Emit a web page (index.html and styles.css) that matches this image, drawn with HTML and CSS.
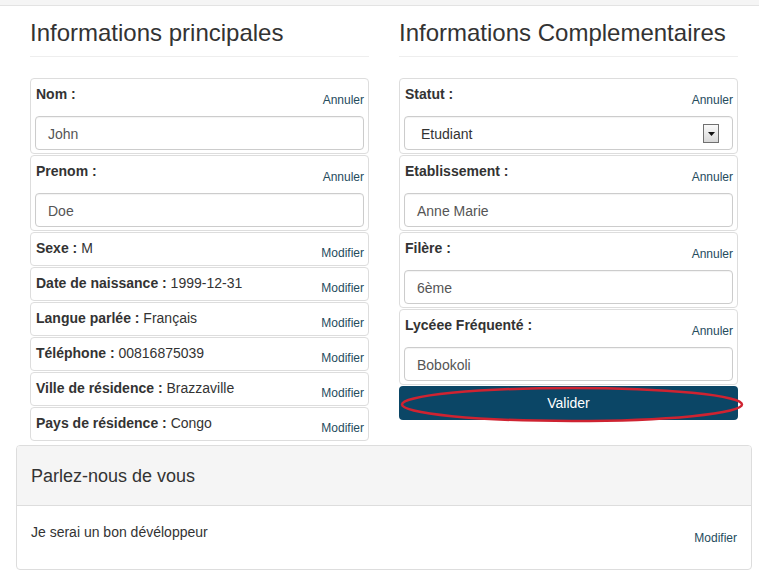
FILE: index.html
```html
<!DOCTYPE html>
<html lang="fr">
<head>
<meta charset="utf-8">
<title>Profil</title>
<link rel="stylesheet" href="styles.css">
</head>
<body>
<div class="topbar"></div>
<div class="page">
  <div class="cols">
    <div class="col">
      <h3 class="title">Informations principales</h3>
      <div class="field">
        <div class="row"><span class="lbl"><b>Nom :</b></span><a class="act">Annuler</a></div>
        <div class="input">John</div>
      </div>
      <div class="field">
        <div class="row"><span class="lbl"><b>Prenom :</b></span><a class="act">Annuler</a></div>
        <div class="input">Doe</div>
      </div>
      <div class="field simple">
        <div class="row"><span class="lbl"><b>Sexe :</b> M</span><a class="act">Modifier</a></div>
      </div>
      <div class="field simple">
        <div class="row"><span class="lbl"><b>Date de naissance :</b> 1999-12-31</span><a class="act">Modifier</a></div>
      </div>
      <div class="field simple">
        <div class="row"><span class="lbl"><b>Langue parlée :</b> Français</span><a class="act">Modifier</a></div>
      </div>
      <div class="field simple">
        <div class="row"><span class="lbl"><b>Téléphone :</b> 00816875039</span><a class="act">Modifier</a></div>
      </div>
      <div class="field simple">
        <div class="row"><span class="lbl"><b>Ville de résidence :</b> Brazzaville</span><a class="act">Modifier</a></div>
      </div>
      <div class="field simple">
        <div class="row"><span class="lbl"><b>Pays de résidence :</b> Congo</span><a class="act">Modifier</a></div>
      </div>
    </div>
    <div class="col">
      <h3 class="title">Informations Complementaires</h3>
      <div class="field">
        <div class="row"><span class="lbl"><b>Statut :</b></span><a class="act">Annuler</a></div>
        <div class="select"><span>Etudiant</span><span class="arrow"><svg width="7" height="4" viewBox="0 0 7 4"><path d="M0 0H7L3.5 4Z" fill="#111"/></svg></span></div>
      </div>
      <div class="field">
        <div class="row"><span class="lbl"><b>Etablissement :</b></span><a class="act">Annuler</a></div>
        <div class="input">Anne Marie</div>
      </div>
      <div class="field">
        <div class="row"><span class="lbl"><b>Filère :</b></span><a class="act">Annuler</a></div>
        <div class="input">6ème</div>
      </div>
      <div class="field">
        <div class="row"><span class="lbl"><b>Lycéee Fréquenté :</b></span><a class="act">Annuler</a></div>
        <div class="input">Bobokoli</div>
      </div>
      <div class="btn-wrap">
        <div class="btn">Valider</div>
        <svg class="ring" width="346" height="38" viewBox="0 0 346 38"><ellipse cx="173" cy="18.5" rx="170" ry="16.5" fill="none" stroke="#cf2331" stroke-width="2.5"/></svg>
      </div>
    </div>
  </div>
  <div class="panel">
    <div class="panel-head">Parlez-nous de vous</div>
    <div class="panel-body">
      <span class="about">Je serai un bon dévéloppeur</span>
      <a class="act">Modifier</a>
    </div>
  </div>
</div>
</body>
</html>
```
FILE: styles.css
```css
* { box-sizing: border-box; }
html, body {
  margin: 0;
  background: #fff;
  font-family: "Liberation Sans", Arial, sans-serif;
  font-size: 14px;
  color: #333;
}
.topbar {
  height: 6px;
  background: #f5f5f5;
  border-bottom: 1px solid #e3e3e3;
}
.page {
  padding: 0 7px 0 16px;
}
.cols {
  display: grid;
  grid-template-columns: 1fr 1fr;
  column-gap: 30px;
  padding: 0 14px;
  align-items: start;
}
.title {
  margin: 14px 0 21px;
  padding-bottom: 10px;
  border-bottom: 1px solid #eee;
  font-size: 24px;
  font-weight: 400;
  line-height: 1.1;
  color: #333;
}
.field {
  border: 1px solid #ddd;
  border-radius: 4px;
  padding: 4px 4px 3px;
  margin-bottom: 1px;
}
.row {
  display: flex;
  justify-content: space-between;
  align-items: flex-end;
  height: 26px;
}
.field.simple .row { height: 25px; }
.lbl {
  align-self: flex-start;
  line-height: 20px;
  padding: 1px 0 0 1px;
}
.lbl b { font-weight: 700; }
.act {
  font-size: 12px;
  line-height: 17px;
  color: #254b5d;
  text-decoration: none;
}
.input, .select {
  height: 34px;
  margin-top: 7px;
  border: 1px solid #ccc;
  border-radius: 4px;
  box-shadow: inset 0 1px 1px rgba(0,0,0,0.05);
  color: #555;
  line-height: 20px;
}
.input {
  padding: 7px 12px 5px;
}
.select {
  display: flex;
  align-items: center;
  justify-content: space-between;
  padding: 1px 13px 0 16px;
  color: #333;
}
.arrow {
  width: 16px;
  height: 19px;
  border: 1px solid #707070;
  background: linear-gradient(#fafafa, #d8d8d8);
  display: flex;
  align-items: center;
  justify-content: center;
}
.btn-wrap {
  position: relative;
}
.btn {
  height: 34px;
  background: #0b4666;
  color: #fff;
  border-radius: 4px;
  display: flex;
  align-items: center;
  justify-content: center;
  font-size: 14px;
}
.ring {
  position: absolute;
  left: 0;
  top: 0;
  overflow: visible;
  pointer-events: none;
}
.panel {
  margin-top: 3px;
  border: 1px solid #ddd;
  border-radius: 4px;
}
.panel-head {
  background: #f5f5f5;
  border-bottom: 1px solid #ddd;
  border-radius: 3px 3px 0 0;
  padding: 21px 14px 18px;
  font-size: 18px;
  line-height: 1.1;
  color: #333;
}
.panel-body {
  display: flex;
  justify-content: space-between;
  align-items: flex-end;
  height: 63px;
  padding: 16px 14px 22px;
}
.about {
  align-self: flex-start;
  line-height: 20px;
}
```
